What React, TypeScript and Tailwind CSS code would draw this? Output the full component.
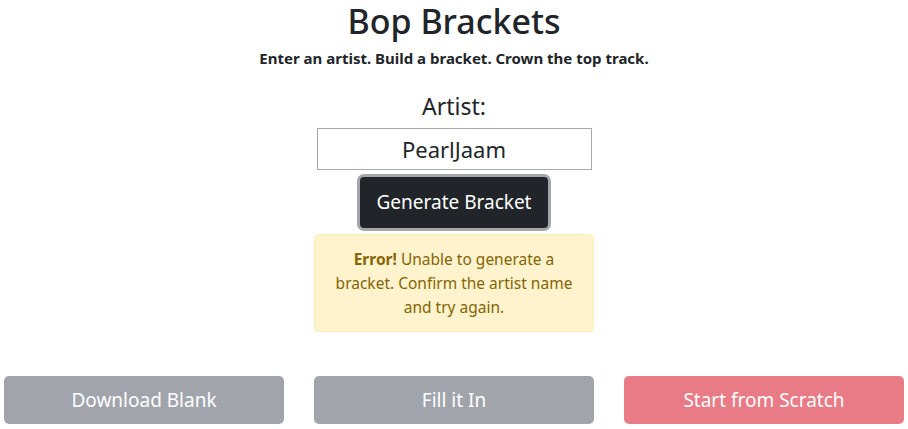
import { useState } from 'react'

const font = { fontFamily: '"Noto Sans", "Open Sans", sans-serif' }

export default function App() {
  const [artist, setArtist] = useState('PearlJaam')

  return (
    <div className="min-h-[429px] bg-white text-[#212529]" style={font}>
      <header className="flex flex-col items-center">
        <h1 className="text-[34px] leading-[42px] font-medium">Bop Brackets</h1>
        <p className="mt-[6px] text-[15px] leading-[20px] font-bold">
          Enter an artist. Build a bracket. Crown the top track.
        </p>
      </header>

      <div className="mt-[22px] grid grid-cols-3 gap-[30px] px-[4px]">
        <div />
        <div className="flex flex-col items-center">
          <label className="text-[23px] leading-[32px]">Artist:</label>
          <input
            value={artist}
            onChange={(e) => setArtist(e.target.value)}
            className="mt-[6px] h-[42px] w-[275px] border border-[#a9a9a9] text-center text-[22px] outline-none"
          />
          <button className="mt-[4px] rounded-[7px] border-[3px] border-[#a3a6aa] bg-[#212529] px-[17px] h-[57px] text-[19px] text-white">
            Generate Bracket
          </button>
          <div className="mt-[3px] w-full rounded-[4px] border border-[#ffeeba] bg-[#fff3cd] px-[20px] py-[12px] text-center text-[15.5px] leading-[24px] text-[#856404]">
            <strong className="font-bold">Error!</strong> Unable to generate a
            <br />
            bracket. Confirm the artist name
            <br />
            and try again.
          </div>
        </div>
        <div />
      </div>

      <div className="mt-[44px] grid grid-cols-3 gap-[30px] px-[4px]">
        <button className="h-[48px] rounded-[5px] bg-[#a1a5ab] text-[19px] text-white">
          Download Blank
        </button>
        <button className="h-[48px] rounded-[5px] bg-[#a1a5ab] text-[19px] text-white">
          Fill it In
        </button>
        <button className="h-[48px] rounded-[5px] bg-[#e87b85] text-[19px] text-white">
          Start from Scratch
        </button>
      </div>
    </div>
  )
}
